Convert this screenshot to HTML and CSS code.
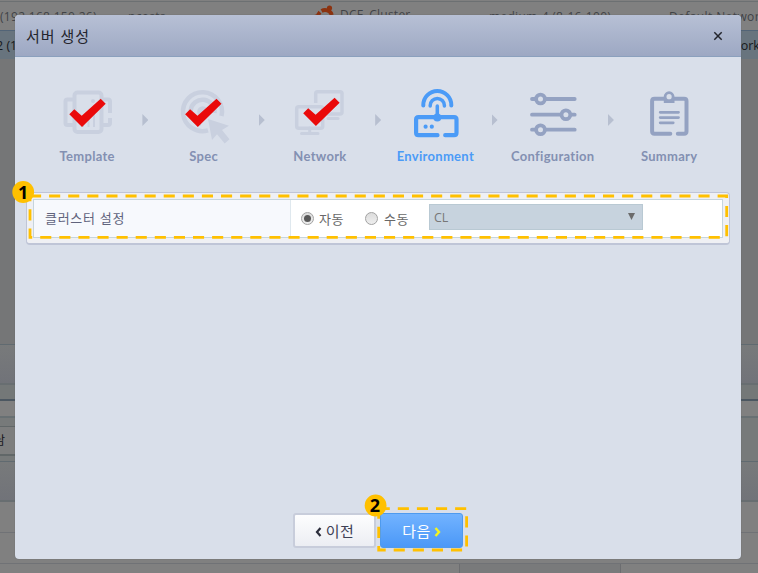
FILE: index.html
```html
<!DOCTYPE html>
<html lang="ko">
<head>
<meta charset="utf-8">
<title>서버 생성</title>
<link rel="stylesheet" href="styles.css">
</head>
<body>
<div class="page">
  <div class="row first"><span class="ip">(192.168.150.26)</span><span class="user">ncosts</span>
    <svg class="ubuntu" width="24" height="24" viewBox="0 0 24 24"><circle cx="12" cy="13" r="7" fill="none" stroke="#8c3310" stroke-width="4" stroke-dasharray="12.6 2"/><circle cx="16.5" cy="4" r="2.6" fill="#8c3310"/><circle cx="3" cy="13" r="2.6" fill="#8c3310"/></svg>
    <span class="cluster">DCE_Cluster</span><span class="spec">medium-4 (8-16-100)</span><span class="net">Default Network</span></div>
  <div class="row selected"><span class="ip2">2 (1</span><span class="net2">work</span></div>
  <div class="blank"></div>
  <div class="bar"></div>
  <div class="strip"></div>
  <div class="line-row"></div>
  <div class="tools"><span class="tool-button">남</span></div>
  <div class="bar"></div>
  <div class="cells"></div>
  <div class="cells"></div>
  <div class="cells last"><i></i><i></i><i></i></div>
</div>

<section class="modal">
  <header class="modal-head"><h1>서버 생성</h1>
    <svg class="close" width="10" height="10" viewBox="0 0 10 10"><path d="M1.3 1.3L8.7 8.7M8.7 1.3L1.3 8.7" stroke="#23252d" stroke-width="1.5"/></svg>
  </header>
  <nav class="steps">
    <div class="step done">
      <svg width="60" height="58" viewBox="0 0 60 58"><g fill="none" stroke="#c9d0df" stroke-width="4"><path d="M17 11.500H10.500Q8.500 11.500 8.500 13.500V35Q8.500 37 10.500 37H17M45 11.500H51Q53 11.500 53 13.500V25M53 30V35Q53 37 51 37H45"/><rect x="17.500" y="4.500" width="27" height="39.500" rx="3"/><path d="M26 39V33M31.500 39V28M37 39V22" stroke-width="2"/></g><circle cx="36" cy="13" r="2" fill="#c9d0df"/><path class="tick" d="M12.300 26.300L17.300 21.300L24.700 27.700L43.700 10.700L48.700 15.700L25 39Z"/></svg>
      <span>Template</span>
    </div>
    <b class="next-mark"></b>
    <div class="step done">
      <svg width="60" height="58" viewBox="0 0 60 58"><g fill="none" stroke="#c9d0df" stroke-width="4.500"><path d="M34 42.400A19.500 19.500 0 1 1 47.500 28"/><path d="M27 35.600A12 12 0 1 1 40.500 25"/></g><circle cx="28.700" cy="23.700" r="5.500" fill="#c9d0df"/><path fill="#c9d0df" d="M34 31L55 37.700L48 42L55.500 51.300L50.700 55.500L43 46.300L38 52Z"/><path class="tick" transform="translate(-1.200)" d="M12.300 26.300L17.300 21.300L24.700 27.700L43.700 10.700L48.700 15.700L25 39Z"/></svg>
      <span>Spec</span>
    </div>
    <b class="next-mark"></b>
    <div class="step done">
      <svg width="60" height="58" viewBox="0 0 60 58"><g fill="none" stroke="#c9d0df" stroke-width="3.500"><path d="M25.700 15V5.500Q25.700 3.700 27.500 3.700H50Q52 3.700 52 5.500V24Q52 26 50 26H37"/><path d="M38 30.500H48" stroke-linecap="round" stroke-width="3"/><rect x="6.700" y="18.700" width="26" height="21.500" rx="2"/><path d="M19.700 40V45M11.500 45.500H28" stroke-linecap="round" stroke-width="3"/></g><path class="tick" transform="translate(.9 -1)" d="M12.300 26.300L17.300 21.300L24.700 27.700L43.700 10.700L48.700 15.700L25 39Z"/></svg>
      <span>Network</span>
    </div>
    <b class="next-mark"></b>
    <div class="step active">
      <svg width="60" height="58" viewBox="0 0 60 58"><g fill="none" stroke="#4b9bf7" stroke-linecap="round"><path stroke-width="4" d="M17.300 17.500V17A14 14 0 0 1 45.300 17V17.500"/><path stroke-width="3.500" d="M24.200 18V17.500A7.100 7.100 0 0 1 38.400 17.500V18"/><path stroke-width="3.500" d="M31.300 18V30"/><path stroke-width="4.200" d="M31.500 47.200H12.500Q10.100 47.200 10.100 44.800V31.600Q10.100 29.200 12.500 29.200H48.100Q50.500 29.200 50.500 31.600V44.800Q50.500 47.200 48.100 47.200H39.200"/></g><circle cx="31.300" cy="29.500" r="4" fill="#4b9bf7"/><circle cx="19.600" cy="38.700" r="2.100" fill="#4b9bf7"/><circle cx="25.800" cy="38.700" r="2.100" fill="#4b9bf7"/></svg>
      <span>Environment</span>
    </div>
    <b class="next-mark"></b>
    <div class="step">
      <svg width="60" height="58" viewBox="0 0 60 58"><g fill="#d9dfea" stroke="#94a2c2" stroke-width="3.800" stroke-linecap="round"><path d="M9 11H51.700M9 26.700H51.700M9 41.700H51.700"/><circle cx="17.500" cy="11" r="4.400"/><circle cx="42.900" cy="26.700" r="4.400"/><circle cx="17.500" cy="41.700" r="4.400"/></g></svg>
      <span>Configuration</span>
    </div>
    <b class="next-mark"></b>
    <div class="step">
      <svg width="60" height="58" viewBox="0 0 60 58"><g fill="none" stroke="#94a2c2" stroke-linecap="round"><path stroke-width="4" d="M31.300 45.700H15.500Q13.100 45.700 13.100 43.300V13Q13.100 10.700 15.500 10.700H45.100Q47.500 10.700 47.500 13V43.300Q47.500 45.700 45.100 45.700H38.800"/><path stroke-width="2.800" d="M21.200 24.300H39.500M21.200 29.600H39.500M21.200 34.800H34.200"/></g><path fill="#94a2c2" d="M24.800 10H35.500V15H24.800Z"/><circle cx="30.100" cy="8.700" r="4" fill="#d9dfea" stroke="#94a2c2" stroke-width="2.800"/></svg>
      <span>Summary</span>
    </div>
  </nav>
  <div class="panel">
    <div class="field">
      <div class="label">클러스터 설정</div>
      <div class="value">
        <i class="radio on"></i><span class="auto">자동</span><i class="radio"></i><span class="manual">수동</span>
        <div class="select"><span>CL</span><i></i></div>
      </div>
    </div>
  </div>
  <footer class="buttons">
    <button class="prev"><svg width="7" height="10" viewBox="0 0 7 10"><path d="M5.500 1L2 5L5.500 9" fill="none" stroke="#2b2d3b" stroke-width="2.200"/></svg>이전</button>
    <button class="next">다음<svg width="7" height="10" viewBox="0 0 7 10"><path d="M1.500 1L5 5L1.500 9" fill="none" stroke="#f5f51e" stroke-width="2.400"/></svg></button>
  </footer>
</section>

<svg class="callouts" width="758" height="573" viewBox="0 0 758 573">
  <g fill="none" stroke="#ffc000">
    <path d="M30 196H726.700V237.300H30Z" stroke-width="2.800" stroke-dasharray="11.100 8"/>
    <path d="M378.700 508.700H466.600V550H378.700Z" stroke-width="2.800" stroke-dasharray="11.100 8"/>
  </g>
  <circle cx="23.200" cy="192" r="10.900" fill="#ffc000"/>
  <circle cx="375.600" cy="505.500" r="10.900" fill="#ffc000"/>
  <text x="23.200" y="198.500">1</text>
  <text x="375" y="512">2</text>
</svg>
</body>
</html>
```
FILE: styles.css
```css
* { box-sizing: border-box; }
body { margin: 0; width: 758px; height: 573px; overflow: hidden; font-family: "Open Sans", "Noto Sans CJK KR", sans-serif; }
i, b { font-style: normal; display: block; }

.page { width: 758px; height: 573px; background: #808080; overflow: hidden; }
.row { display: flex; height: 30px; font-size: 12px; line-height: 30px; color: #404347; white-space: nowrap; overflow: hidden; border-top: 1px solid #6c7072; }
.row > * { flex-shrink: 0; }
.row.first { margin-top: 1px; height: 29px; }
.ip { width: 128px; letter-spacing: .3px; }
.user { width: 182px; letter-spacing: .3px; }
.ubuntu { width: 30px; height: 24px; margin-top: 2px; }
.cluster { width: 149px; line-height: 26px; letter-spacing: .25px; }
.spec { width: 180px; letter-spacing: .3px; }
.net { letter-spacing: .4px; }
.row.selected { height: 29px; background: #68747e; border-color: #526477; color: #17191d; font-size: 12.500px; }
.ip2 { width: 735px; margin-left: -4px; }
.blank { height: 285px; background: #757677; }
.bar { height: 41px; border-top: 1px solid #606a70; border-bottom: 2px solid #686e71; background: linear-gradient(#787a7b, #717379); }
.strip { height: 14px; background: #747878; }
.line-row { height: 19px; border-top: 2px solid #4c5761; border-bottom: 2px solid #687073; }
.tools { height: 43px; background: #777a7a; padding-top: 8px; }
.tool-button { display: block; width: 60px; height: 30px; border: 1px solid #616768; border-bottom-width: 2px; background: #7d7e7e; font-size: 12px; line-height: 28px; color: #16171c; margin-left: -7px; }
.cells { height: 31px; border-bottom: 1px solid #707276; }
.cells.last { height: 40px; border: 0; display: flex; }
.cells.last i { flex: 1; border-left: 1px solid #6c6d70; }
.cells.last i:first-child { flex: 0 0 459px; border: 0; }
.cells.last i:nth-child(2) { flex: 0 0 161px; background: #797a7b; }

.modal { position: absolute; left: 15px; top: 15px; width: 726px; height: 544px; background: #d9dfea; border-radius: 4px; overflow: hidden; display: flex; flex-direction: column; box-shadow: 0 0 1px #4f5356; }
.modal-head { height: 42px; flex: none; display: flex; align-items: center; justify-content: space-between; padding: 0 18px 0 11px; background: linear-gradient(#b7c0d5, #9da8c3); border-bottom: 1px solid #8ba0bd; }
.modal-head h1 { margin: 0; font-size: 15px; line-height: 20px; font-weight: 400; color: #24252d; letter-spacing: .9px; font-family: "Noto Sans CJK KR", sans-serif; }

.steps { display: flex; margin: 29px 0 0 17px; height: 83px; }
.step { width: 110.400px; flex: none; display: flex; flex-direction: column; align-items: center; color: #8390b2; font: 700 13px/16px Lato, sans-serif; letter-spacing: .3px; }
.step svg { flex: none; margin-top: 2px; }
.step span { margin-top: 2px; white-space: nowrap; }
.step.active { color: #4b9bf7; }
.step.active span { margin-right: 2px; }
.tick { fill: #ea0a0a; }
.next-mark { width: 6px; height: 12px; flex: none; margin: 28px 0 0 0; background: #b7bfd0; clip-path: polygon(0 0, 100% 50%, 0 100%); }

.panel { margin: 23px 11px 0 11px; height: 53px; padding: 6px; flex: none; background: #eff0f4; border: 1px solid #bfc5d7; border-radius: 4px; border-bottom-width: 2px; }
.field { height: 39px; display: flex; border: 1px solid #c6d5dd; background: #fff; }
.label { width: 257px; padding-left: 11px; background: #f7f9fd; border-right: 1px solid #dfe8ee; font-size: 13px; line-height: 37px; color: #60637c; letter-spacing: .7px; }
.value { display: flex; align-items: center; padding-left: 10px; font-size: 13px; color: #686868; letter-spacing: .5px; }
.radio { width: 13px; height: 13px; border-radius: 50%; border: 1px solid #a2a2a2; background: linear-gradient(#dcdcdc, #eee); padding: 2px; }
.radio.on::before { content: ""; display: block; width: 7px; height: 7px; border-radius: 50%; background: #585858; }
.auto { width: 46px; margin-left: 5px; }
.manual { width: 45px; margin-left: 6px; }
.select { width: 214px; height: 26px; margin-top: -3px; padding: 0 7px 0 4px; display: flex; align-items: center; justify-content: space-between; background: #c7d3de; border: 1px solid #b9c9d3; color: #777; font-size: 12.500px; letter-spacing: 0; }
.select i { width: 7px; height: 7px; background: #6b6b6b; clip-path: polygon(0 0, 100% 0, 50% 100%); margin-top: -1px; }

.buttons { display: flex; gap: 4px; margin: auto 0 11px 278px; }
.buttons button { width: 83px; height: 35px; padding: 0; display: flex; align-items: center; justify-content: center; gap: 4px; border-radius: 3px; font: 15px "Noto Sans CJK KR", sans-serif; letter-spacing: .5px; }
.buttons svg { margin-top: 2px; }
.prev { border: 2px solid #c8cddb; background: linear-gradient(#fdfdfe, #eceef3); color: #3d4055; }
.next { border: 1px solid #4e9aee; background: linear-gradient(#72b3ff, #4b98f7); color: #fff; }
.buttons .next { gap: 3px; }

.callouts { position: absolute; left: 0; top: 0; }
.callouts text { font: 700 18px "Open Sans", sans-serif; text-anchor: middle; fill: #000; }
```
